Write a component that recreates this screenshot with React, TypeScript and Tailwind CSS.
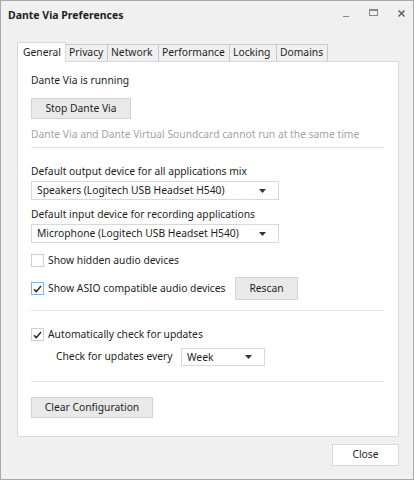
import React from 'react'

const font = { fontFamily: '"Noto Sans", "Open Sans", sans-serif' }

function Caret() {
    return (
        <svg width="7" height="4" viewBox="0 0 7 4" className="shrink-0">
            <path d="M0 0h7L3.5 4z" fill="#333" />
        </svg>
    )
}

function Select({ value, className }: { value: string; className: string }) {
    return (
        <div className={`flex items-center justify-between bg-white border border-[#d9d9d9] pl-[5px] pr-[12px] ${className}`}>
            <span className="leading-none whitespace-nowrap">{value}</span>
            <Caret />
        </div>
    )
}

function Check({ checked, focus }: { checked?: boolean; focus?: boolean }) {
    return (
        <span
            className={`flex items-center justify-center w-[13px] h-[13px] bg-white border shrink-0 ${
                focus ? 'border-[#7fb4e6]' : 'border-[#cfcfcf]'
            }`}
        >
            {checked && (
                <svg width="9" height="8" viewBox="0 0 9 8">
                    <path d="M1 4.2l2.3 2.4L8 1" fill="none" stroke="#222" strokeWidth="1.4" />
                </svg>
            )}
        </span>
    )
}

function Btn({ label, className }: { label: string; className: string }) {
    return (
        <div className={`flex items-center justify-center whitespace-nowrap bg-[#e9e9e9] border border-[#d3d3d3] ${className}`}>
            {label}
        </div>
    )
}

const tabs = ['General', 'Privacy', 'Network', 'Performance', 'Locking', 'Domains']
const tabW = [49, 42, 51, 71, 47, 51]

export default function App() {
    return (
        <div
            className="w-[414px] h-[480px] bg-[#f0f0f0] border border-[#a9a9a9] flex flex-col text-[10.3px] text-[#1e1e1e] whitespace-nowrap"
            style={font}
        >
            {/* Title bar */}
            <div className="h-[30px] flex items-center pl-[7px] pr-[8px]">
                <span className="font-bold text-[10.5px] -mt-[1px]">Dante Via Preferences</span>
                <div className="ml-auto flex items-start gap-[20px] -mt-[6px]">
                    <span className="mt-[7px] w-[6px] h-px bg-[#8a8a8a]" />
                    <span className="w-[9px] h-[7px] border border-[#8a8a8a] border-t-2" />
                    <svg width="7" height="7" viewBox="0 0 7 7" className="mt-[1px]">
                        <path d="M0.5 0.5l6 6M6.5 0.5l-6 6" stroke="#555" strokeWidth="1.3" />
                    </svg>
                </div>
            </div>

            {/* Tabs */}
            <div className="ml-[16px] mt-[11px] flex items-end">
                {tabs.map((t, i) => (
                    <div
                        key={t}
                        style={{ width: tabW[i] }}
                        className={
                            i === 0
                                ? 'h-[20px] -mb-px relative z-10 bg-white border border-b-0 border-[#d9d9d9] pl-[5px] leading-[18px]'
                                : 'h-[17px] border border-b-0 border-l-0 border-[#c8c8c8] pl-[3px] leading-[15px]'
                        }
                    >
                        {t}
                    </div>
                ))}
            </div>

            {/* Panel */}
            <div className="ml-[16px] w-[382px] h-[376px] bg-white border border-[#d9d9d9] pl-[13px] flex flex-col">
                <div className="mt-[10px] h-[16px] leading-[16px]">Dante Via is running</div>
                <Btn label="Stop Dante Via" className="mt-[10px] w-[100px] h-[21px]" />
                <div className="mt-[7px] h-[16px] leading-[16px] text-[#a3a3a3]">
                    Dante Via and Dante Virtual Soundcard cannot run at the same time
                </div>
                <div className="mt-[5px] w-[353px] h-px bg-[#e3e3e3]" />

                <div className="mt-[15px] h-[16px] leading-[16px]">Default output device for all applications mix</div>
                <Select value="Speakers (Logitech USB Headset H540)" className="mt-[2px] w-[248px] h-[19px]" />
                <div className="mt-[6px] h-[16px] leading-[16px]">Default input device for recording applications</div>
                <Select value="Microphone (Logitech USB Headset H540)" className="mt-[2px] w-[248px] h-[19px]" />

                <div className="mt-[11px] flex items-center gap-[4px] h-[13px]">
                    <Check />
                    <span>Show hidden audio devices</span>
                </div>
                <div className="mt-[10px] flex items-center h-[23px]">
                    <div className="flex items-center gap-[4px] w-[204px]">
                        <Check checked focus />
                        <span>Show ASIO compatible audio devices</span>
                    </div>
                    <Btn label="Rescan" className="w-[63px] h-[23px]" />
                </div>
                <div className="mt-[10px] w-[353px] h-px bg-[#e3e3e3]" />

                <div className="mt-[17px] flex items-center gap-[4px] h-[13px]">
                    <Check checked />
                    <span>Automatically check for updates</span>
                </div>
                <div className="mt-[7px] flex items-center pl-[25px] h-[18px]">
                    <span className="w-[125px]">Check for updates every</span>
                    <Select value="Week" className="w-[84px] h-[18px]" />
                </div>
                <div className="mt-[15px] w-[353px] h-px bg-[#e3e3e3]" />

                <Btn label="Clear Configuration" className="mt-[15px] w-[122px] h-[21px]" />
            </div>

            {/* Footer */}
            <div className="flex justify-end pr-[14px] mt-[7px]">
                <div className="w-[67px] h-[22px] bg-white border border-[#d9d9d9] flex items-center justify-center">
                    Close
                </div>
            </div>
        </div>
    )
}
